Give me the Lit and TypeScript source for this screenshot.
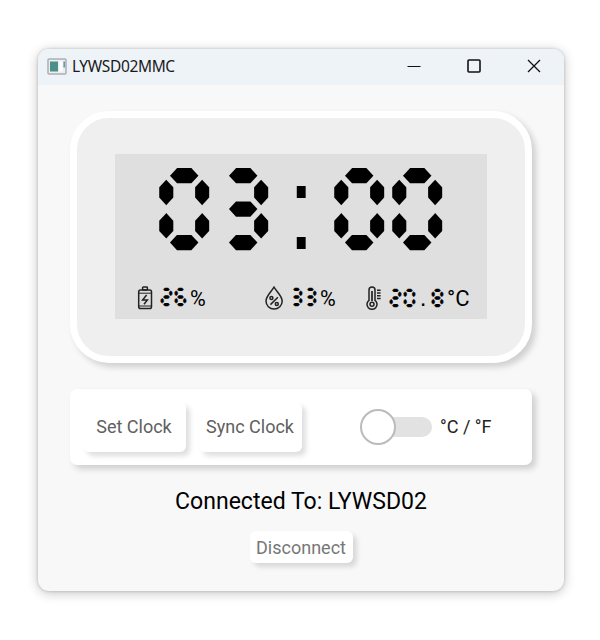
import { LitElement, html, css, svg } from "lit";
import { customElement, property } from "lit/decorators.js";

const toSegmented = (value: string) =>
  value.replace(/\d/g, (d) => String.fromCodePoint(0x1fbf0 + Number(d)));

@customElement("lcd-text")
class LcdText extends LitElement {
  @property() value = "";
  static styles = css`
    :host { display: flex; align-items: baseline; }
    span { width: var(--pitch); text-align: center; white-space: pre; display: block; transform: var(--stretch); -webkit-text-stroke: var(--ink) #000; }
    .mark { font-family: "Liberation Sans", sans-serif; font-size: 1.1em; -webkit-text-stroke: 0; transform: var(--mark-shift); }
  `;
  render() {
    return [...toSegmented(this.value)].map((c) =>
      c === ":" || c === "." ? html`<span class="mark">${c}</span>` : html`<span>${c}</span>`);
  }
}

const battery = svg`
  <rect x="5.6" y="1" width="4.8" height="3" rx="0.7"/>
  <rect x="1.7" y="4" width="12.8" height="18.6" rx="1.8"/>
  <path d="M2 7.2h12.4M2 20h12.4" stroke-width="1"/>
  <path d="M9.6 9 5.6 14h4.8L7 18.3" stroke-width="1.5"/>`;
const drop = svg`
  <path d="M9 1.2C6.5 5.5 1 10 1 15a8.1 8.1 0 0 0 16.2 0C17.2 10 11.6 5.5 9 1.2Z"/>
  <circle cx="6.4" cy="12" r="1.5"/><circle cx="11.8" cy="18" r="1.5"/>
  <path d="M12.9 11.3 5.4 18.6"/>`;
const thermo = svg`
  <path d="M3 14.3V4a3 3 0 0 1 6 0v10.3a5 5 0 1 1-6 0Z"/>
  <path d="M6 5v10" stroke-width="1.7"/><circle cx="6" cy="18.2" r="2"/>
  <path d="M11 4.2h3.6M11 7h3.6M11 9.8h3.6M11 12.6h3.6" stroke-width="1.5"/>`;

@customElement("app-root")
class AppRoot extends LitElement {
  static styles = css`
    :host { display: block; box-sizing: border-box; width: 600px; height: 640px; padding: 49px 36px 49px 38px; background: #fff; font-family: Roboto, sans-serif; color: #000; }
    * { box-sizing: border-box; }
    svg { display: block; fill: none; stroke: #222; stroke-width: 1.5; }
    .window { height: 542px; width: 526px; border-radius: 11px; overflow: hidden; background: #f8f8f8; box-shadow: 0 0 3px rgba(0,0,0,.2), 0 2px 12px rgba(0,0,0,.24); }
    .bar { height: 36px; background: #eef3f8; display: flex; align-items: center; padding: 0 0 2px 9px; font: 15.5px "Noto Sans", sans-serif; color: #1a1a1a; }
    .title { margin-left: 5px; flex: 1; letter-spacing: -.35px; }
    .controls { display: flex; gap: 46px; padding-right: 23px; }
    .controls svg { stroke: #111; stroke-width: 1.3; }
    .body { padding: 26px 32px 0; display: flex; flex-direction: column; align-items: center; }
    .bezel { width: 462px; height: 252px; border: 7px solid #fff; border-radius: 39px; background: #efefef; padding: 36px 38px; box-shadow: 4px 4px 6px rgba(0,0,0,.17); }
    .lcd { width: 372px; height: 165px; background: #dfdfdf; }
    .time { height: 129px; display: flex; justify-content: center; font-size: 100px; line-height: 104px; --pitch: 58.3px; --ink: 2px; --stretch: scale(1.065, 1.15); --mark-shift: translateY(2px) scale(.85, 1.08); }
    .stats { display: grid; grid-template-columns: 128px 101px auto; align-items: center; height: 30px; margin-left: 22px; font-size: 22px; --pitch: 14px; --ink: .3px; --stretch: scale(1.15, 1.18); --mark-shift: none; }
    .stat { display: flex; align-items: center; }
    .stat lcd-text { margin: 0 3px 0 6px; line-height: 26px; }
    .unit-sign { font-size: 21.5px; }
    .panel { margin-top: 26px; width: 462px; height: 76px; border-radius: 7px; background: #fff; box-shadow: 4px 4px 6px rgba(0,0,0,.17); padding: 13px; display: flex; align-items: center; gap: 13px; font-size: 18px; color: #222; }
    .btn { width: 103px; height: 50px; border: 0; border-radius: 6px; background: #fff; color: #606060; font: 18px Roboto, sans-serif; padding: 0 1px 2px 0; white-space: nowrap; box-shadow: 4px 4px 5px rgba(0,0,0,.13); }
    .switch { margin-left: 45px; width: 72px; height: 36px; display: flex; align-items: center; }
    .knob { width: 36px; height: 36px; border-radius: 50%; border: 2px solid #bbb; background: #fff; flex: none; position: relative; z-index: 1; }
    .track { height: 20px; margin-left: -6px; width: 42px; border-radius: 0 10px 10px 0; background: #e2e2e2; }
    .unit { margin-left: -5px; padding-bottom: 2px; }
    .status { margin-top: 22px; font-size: 23.05px; line-height: 30px; }
    .small { margin-top: 14px; height: 32px; padding: 0; color: #777; }
  `;
  render() {
    return html`<div class="window">
      <div class="bar">
        <svg width="20" height="17" viewBox="0 0 20 17"><rect x="1" y="1" width="18" height="15" rx="1" fill="#eee" stroke="#aaafb5" stroke-width="1.5"/><rect x="3" y="3.5" width="8" height="10" fill="#4a8f88" stroke="none"/><rect x="12.5" y="3.5" width="3" height="10" fill="#fff" stroke="none"/><rect x="16.5" y="3.5" width="1.3" height="6" fill="#4386a5" stroke="none"/></svg>
        <span class="title">LYWSD02MMC</span>
        <div class="controls">
          <svg width="14" height="14"><path d="M.5 7.5h13" stroke-width="1"/></svg>
          <svg width="14" height="14"><rect x="1" y="1" width="12" height="12" rx="1" stroke-width="1.6"/></svg>
          <svg width="14" height="14"><path d="m1 1 12 12M13 1 1 13"/></svg>
        </div>
      </div>
      <div class="body">
        <div class="bezel"><div class="lcd">
          <lcd-text class="time" value="03:00"></lcd-text>
          <div class="stats">
            <div class="stat"><svg width="16" height="24">${battery}</svg><lcd-text value="26"></lcd-text><span class="unit-sign">%</span></div>
            <div class="stat"><svg width="18" height="24">${drop}</svg><lcd-text value="33"></lcd-text><span class="unit-sign">%</span></div>
            <div class="stat"><svg width="16" height="24">${thermo}</svg><lcd-text value="20.8"></lcd-text><span>°C</span></div>
          </div>
        </div></div>
        <div class="panel">
          <button class="btn">Set Clock</button><button class="btn">Sync Clock</button>
          <div class="switch"><div class="knob"></div><div class="track"></div></div>
          <span class="unit">°C / °F</span>
        </div>
        <div class="status">Connected To: LYWSD02</div>
        <button class="btn small">Disconnect</button>
      </div>
    </div>`;
  }
}
